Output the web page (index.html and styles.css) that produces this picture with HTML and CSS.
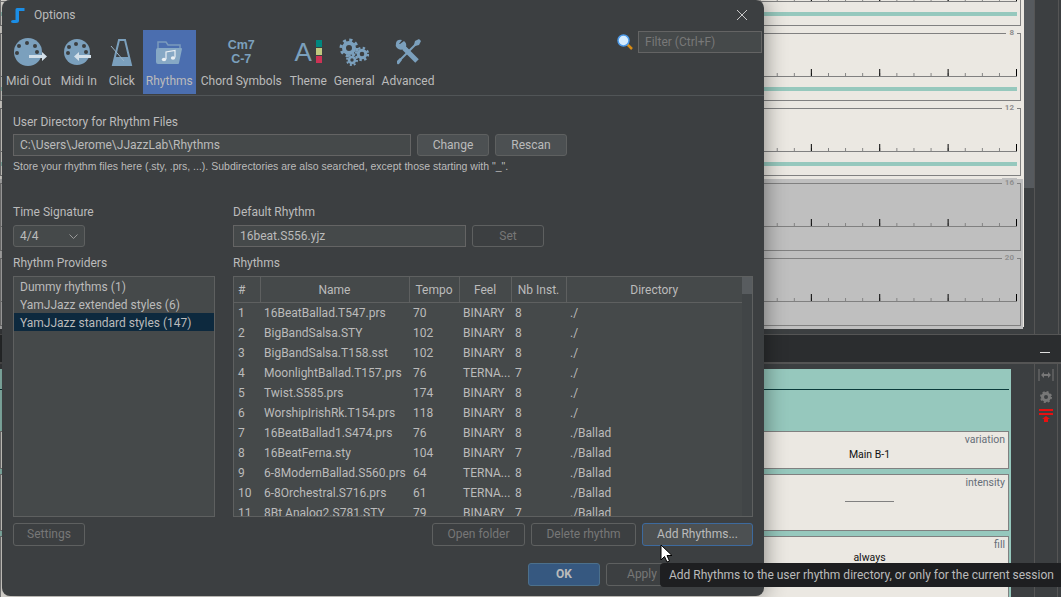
FILE: index.html
```html
<!DOCTYPE html>
<html lang="en">
<head>
    <meta charset="UTF-8">
    <title>Options</title>
    <link rel="stylesheet" href="styles.css">
</head>
<body>
    <!-- application behind the dialog -->
    <div class="app">
        <div class="app-top">
            <div class="bars">
                <div class="bar"><div class="ruler"></div><div class="strip"></div></div>
                <div class="bar"><span class="bar-num">8</span><div class="ruler"></div><div class="strip"></div></div>
                <div class="bar"><span class="bar-num">12</span><div class="ruler"></div><div class="strip"></div></div>
                <div class="bars-off">
                    <div class="bar bar-off"><span class="bar-num">16</span><div class="ruler"></div></div>
                    <div class="bar bar-off"><span class="bar-num">20</span><div class="ruler"></div></div>
                </div>
            </div>
            <div class="app-scroll"><div class="app-thumb"></div></div>
            <div class="app-side"></div>
        </div>
        <div class="app-head"><span class="minimize"></span></div>
        <div class="app-bottom">
            <div class="song">
                <div class="song-top"><div class="song-line"></div></div>
                <div class="card card-a"><span class="card-name">variation</span><span class="card-value">Main B-1</span></div>
                <div class="card card-b"><span class="card-name">intensity</span><span class="card-rule"></span></div>
                <div class="card card-c"><span class="card-name">fill</span><span class="card-value">always</span></div>
            </div>
            <div class="tools">
                <svg class="tool" width="16" height="12" viewBox="0 0 16 12">
                    <path d="M1 0v12M15 0v12" stroke="#777" fill="none"/>
                    <path d="M3 6l3-3v2h4V3l3 3-3 3V7H6v2z" fill="#777"/>
                </svg>
                <svg class="tool" width="12" height="12" viewBox="0 0 24 24">
                    <circle cx="12" cy="12" r="7" fill="none" stroke="#777" stroke-width="6"/>
                    <circle cx="12" cy="12" r="10" fill="none" stroke="#777" stroke-width="4" stroke-dasharray="4 3.85"/>
                </svg>
                <svg class="tool-red" width="14" height="14" viewBox="0 0 14 14">
                    <path d="M0 0h14v2H0zM0 4h14v2H0z" fill="#e81010"/>
                    <path d="M7 7l4 3H9v3H5v-3H3z" fill="#e81010"/>
                </svg>
            </div>
        </div>
    </div>

    <!-- options dialog -->
    <div class="dialog">
        <div class="titlebar">
            <svg class="logo" width="14" height="16" viewBox="0 0 14 16">
                <path d="M4.5 13V2.500q0-1.500 1.500-1.500H13.500v3H8v9.500q0 2.500-3 2.500H2.500Q0 16 0 14.500t2-1.500z" fill="#1b8ee6"/>
            </svg>
            <span class="title">Options</span>
            <svg class="close" width="12" height="12" viewBox="0 0 12 12">
                <path d="M1 1l10 10M11 1L1 11" stroke="#c8c8c8" fill="none"/>
            </svg>
        </div>

        <div class="tabbar">
            <div class="tab tab-out">
                <div class="tab-icon">
                    <svg width="40" height="30" viewBox="0 0 40 30">
                        <circle cx="20" cy="15" r="14" fill="#7ba0bd"/>
                        <g fill="#3c3f41"><circle cx="11" cy="9" r="2"/><circle cx="19" cy="6" r="2"/><circle cx="27" cy="9" r="2"/><circle cx="9" cy="16" r="2"/><circle cx="29" cy="15" r="2"/></g>
                        <path d="M21 18h13v-3l5 4.500-5 4.500v-3H21z" fill="#d3e0ea"/>
                    </svg>
                </div>
                <span>Midi Out</span>
            </div>
            <div class="tab tab-in">
                <div class="tab-icon">
                    <svg width="34" height="30" viewBox="0 0 34 30">
                        <circle cx="15" cy="15" r="13" fill="#7ba0bd"/>
                        <g fill="#3c3f41"><circle cx="7" cy="10" r="2"/><circle cx="14" cy="7" r="2"/><circle cx="22" cy="9" r="2"/><circle cx="6" cy="16" r="2"/><circle cx="24" cy="15" r="2"/></g>
                        <path d="M29 18H17v-3l-5 4.500 5 4.500v-3h12z" fill="#d3e0ea"/>
                    </svg>
                </div>
                <span>Midi In</span>
            </div>
            <div class="tab tab-click">
                <div class="tab-icon">
                    <svg width="24" height="30" viewBox="0 0 24 30">
                        <path d="M9 3h6l6 25H3z" fill="none" stroke="#7ba0bd" stroke-width="2"/>
                        <path d="M5 20h14l2 8H3z" fill="#7ba0bd"/>
                        <path d="M1 9l13 15" stroke="#9ab4c8" fill="none"/>
                    </svg>
                </div>
                <span>Click</span>
            </div>
            <div class="tab tab-on">
                <div class="tab-icon">
                    <svg width="28" height="26" viewBox="0 0 28 26">
                        <path d="M3 22V3h8l2 3h12v4" fill="none" stroke="#7b9bbd" stroke-width="1.500"/>
                        <path d="M3 9h23q1 0 1 1l-3 14q0 1-1 1H3q-2 0-2-2V11q0-2 2-2z" fill="#86a8c5"/>
                        <path d="M11 20V13l9-1.500v7" fill="none" stroke="#e9eff4" stroke-width="1.200"/>
                        <ellipse cx="9" cy="20.500" rx="2.200" ry="1.700" fill="#e9eff4"/>
                        <ellipse cx="18" cy="19" rx="2.200" ry="1.700" fill="#e9eff4"/>
                    </svg>
                </div>
                <span>Rhythms</span>
            </div>
            <div class="tab tab-chord">
                <div class="tab-icon chord-icon">
                    <span>Cm7</span>
                    <span>C-7</span>
                </div>
                <span>Chord Symbols</span>
            </div>
            <div class="tab tab-theme">
                <div class="tab-icon theme-icon">
                    <span class="theme-a">A</span>
                    <div class="swatches">
                        <i class="swatch swatch-teal"></i>
                        <i class="swatch swatch-lime"></i>
                        <i class="swatch swatch-red"></i>
                    </div>
                </div>
                <span>Theme</span>
            </div>
            <div class="tab tab-general">
                <div class="tab-icon">
                    <svg width="30" height="28" viewBox="0 0 30 28">
                        <g fill="none" stroke="#7ba0bd">
                            <circle cx="10" cy="10" r="5" stroke-width="4"/>
                            <circle cx="10" cy="10" r="8" stroke-width="3" stroke-dasharray="3.140 3.140"/>
                            <circle cx="23" cy="16" r="3.800" stroke-width="3"/>
                            <circle cx="23" cy="16" r="6" stroke-width="2.400" stroke-dasharray="2.360 2.350"/>
                            <circle cx="13" cy="22" r="3" stroke-width="2.600"/>
                            <circle cx="13" cy="22" r="5" stroke-width="2" stroke-dasharray="1.960 1.960"/>
                        </g>
                    </svg>
                </div>
                <span>General</span>
            </div>
            <div class="tab tab-advanced">
                <div class="tab-icon">
                    <svg width="26" height="26" viewBox="0 0 26 26">
                        <path d="M24 2L3 23" stroke="#7ba0bd" stroke-width="2" fill="none"/>
                        <path d="M24 0l2 2-2 4-4 1-1-1 1-4z" fill="#7ba0bd"/>
                        <path d="M2 22l3-3 2 2-3 4q-2 1-2-1z" fill="#7ba0bd"/>
                        <path d="M9 9l13 13" stroke="#7ba0bd" stroke-width="5" fill="none"/>
                        <path d="M7 1Q2 0 1 4 0 7 2 9q3 3 7 1l3 3 2-2-3-3q1-4-2-6L5 5 4 5z" fill="#7ba0bd"/>
                    </svg>
                </div>
                <span>Advanced</span>
            </div>
            <div class="search">
                <svg width="16" height="16" viewBox="0 0 16 16">
                    <path d="M10 10l5 5" stroke="#d98c14" stroke-width="2.500" fill="none"/>
                    <circle cx="6.500" cy="6.500" r="5.500" fill="#d5ecff" stroke="#4d9ae8" stroke-width="1.500"/>
                </svg>
                <div class="filter">Filter (Ctrl+F)</div>
            </div>
        </div>

        <div class="content">
            <div class="label label-top">User Directory for Rhythm Files</div>
            <div class="row">
                <div class="field field-dir">C:\Users\Jerome\JJazzLab\Rhythms</div>
                <div class="btn">Change</div>
                <div class="btn">Rescan</div>
            </div>
            <div class="hint">Store your rhythm files here (.sty, .prs, ...). Subdirectories are also searched, except those starting with "_".</div>

            <div class="columns">
                <div class="col">
                    <div class="label">Time Signature</div>
                    <div class="row">
                        <div class="combo">
                            <span>4/4</span>
                            <svg width="9" height="5" viewBox="0 0 9 5"><path d="M.5.500l4 4 4-4" stroke="#9a9a9a" fill="none"/></svg>
                        </div>
                    </div>
                    <div class="label label-gap">Rhythm Providers</div>
                    <div class="list">
                        <div class="list-item">Dummy rhythms (1)</div>
                        <div class="list-item">YamJJazz extended styles (6)</div>
                        <div class="list-item list-sel">YamJJazz standard styles (147)</div>
                    </div>
                    <div class="row row-actions">
                        <div class="btn btn-off">Settings</div>
                    </div>
                </div>
                <div class="col">
                    <div class="label">Default Rhythm</div>
                    <div class="row">
                        <div class="field field-default">16beat.S556.yjz</div>
                        <div class="btn btn-off">Set</div>
                    </div>
                    <div class="label label-gap">Rhythms</div>
                    <div class="table-box">
                        <div class="table-view">
                            <table>
                                <colgroup>
                                    <col class="c-num"><col class="c-name"><col class="c-tempo"><col class="c-feel"><col class="c-inst"><col>
                                </colgroup>
                                <thead>
                                    <tr><th>#</th><th>Name</th><th>Tempo</th><th>Feel</th><th>Nb Inst.</th><th>Directory</th></tr>
                                </thead>
                                <tbody>
                                    <tr><td>1</td><td>16BeatBallad.T547.prs</td><td>70</td><td>BINARY</td><td>8</td><td>./</td></tr>
                                    <tr><td>2</td><td>BigBandSalsa.STY</td><td>102</td><td>BINARY</td><td>8</td><td>./</td></tr>
                                    <tr><td>3</td><td>BigBandSalsa.T158.sst</td><td>102</td><td>BINARY</td><td>8</td><td>./</td></tr>
                                    <tr><td>4</td><td>MoonlightBallad.T157.prs</td><td>76</td><td>TERNA...</td><td>7</td><td>./</td></tr>
                                    <tr><td>5</td><td>Twist.S585.prs</td><td>174</td><td>BINARY</td><td>8</td><td>./</td></tr>
                                    <tr><td>6</td><td>WorshipIrishRk.T154.prs</td><td>118</td><td>BINARY</td><td>8</td><td>./</td></tr>
                                    <tr><td>7</td><td>16BeatBallad1.S474.prs</td><td>76</td><td>BINARY</td><td>8</td><td>./Ballad</td></tr>
                                    <tr><td>8</td><td>16BeatFerna.sty</td><td>104</td><td>BINARY</td><td>7</td><td>./Ballad</td></tr>
                                    <tr><td>9</td><td>6-8ModernBallad.S560.prs</td><td>64</td><td>TERNA...</td><td>8</td><td>./Ballad</td></tr>
                                    <tr><td>10</td><td>6-8Orchestral.S716.prs</td><td>61</td><td>TERNA...</td><td>8</td><td>./Ballad</td></tr>
                                    <tr><td>11</td><td>8Bt Analog2.S781.STY</td><td>79</td><td>BINARY</td><td>7</td><td>./Ballad</td></tr>
                                </tbody>
                            </table>
                        </div>
                        <div class="table-scroll"><div class="table-thumb"></div></div>
                    </div>
                    <div class="row row-actions row-end">
                        <div class="btn btn-off btn-open">Open folder</div>
                        <div class="btn btn-off btn-delete">Delete rhythm</div>
                        <div class="btn btn-focus btn-add">Add Rhythms...</div>
                    </div>
                </div>
            </div>

            <div class="footer">
                <div class="btn btn-ok">OK</div>
                <div class="btn btn-off">Apply</div>
            </div>
        </div>
    </div>

    <div class="tooltip">Add Rhythms to the user rhythm directory, or only for the current session</div>
    <svg class="cursor" width="13" height="19" viewBox="0 0 13 19">
        <path d="M1 1v15l3.500-3.500 2.500 5.500 2.500-1-2.500-5.500H12z" fill="#fff" stroke="#000"/>
    </svg>
</body>
</html>
```

FILE: styles.css
```css
* {
    margin: 0;
    padding: 0;
    box-sizing: border-box;
}
body {
    width: 1061px;
    height: 597px;
    overflow: hidden;
    position: relative;
    background: #3c3f41;
    font-family: Roboto, "Noto Sans", sans-serif;
    font-size: 12px;
    color: #bbbbbb;
}

/* application behind the dialog */
.app {
    height: 597px;
    display: flex;
    flex-direction: column;
}
.app-top {
    height: 335px;
    flex: none;
    display: flex;
    overflow: hidden;
    border-bottom: 1px solid #555;
}
.bars {
    width: 1024px;
    height: 369px;
    flex: none;
    margin-top: -42px;
    padding-right: 3px;
    background: #ebe8e2;
    display: flex;
    flex-direction: column;
    gap: 7px;
}
.bars-off {
    margin-top: -4px;
    margin-right: -2px;
    padding: 4px 2px 3px 0;
    background: #bfbfbf;
    display: flex;
    flex-direction: column;
    gap: 7px;
}
.bar {
    height: 68px;
    flex: none;
    position: relative;
    border: 1px solid #808080;
    background: #ebe8e2;
}
.bar-off {
    background: #bfbfbf;
}
.bar-num {
    position: absolute;
    top: -6px;
    right: 3px;
    padding: 0 3px;
    font-size: 8px;
    line-height: 10px;
    font-weight: 700;
    color: #8f8f8f;
    background: #ebe8e2;
}
.bar-off .bar-num {
    background: #bfbfbf;
}
.ruler {
    height: 8px;
    margin: 35px 3px 0 0;
    border-bottom: 1px solid #808080;
    background:
        linear-gradient(to left, #000 1px, transparent 1px) right bottom / 68.4px 7px repeat-x,
        linear-gradient(to left, #808080 1px, transparent 1px) right bottom / 17.1px 3px repeat-x;
}
.strip {
    height: 4px;
    margin: 10px 3px 0 0;
    background: #96c8bd;
}
.app-scroll {
    width: 11px;
    flex: none;
    background: #3c3f41;
    border-right: 1px solid #555;
}
.app-thumb {
    height: 188px;
    background: #565a5e;
}
.app-side {
    flex: 1;
    margin-right: 2px;
    border-right: 1px solid #555;
}
.app-head {
    height: 27px;
    flex: none;
    background: #2b2d2f;
    display: flex;
    align-items: flex-end;
    justify-content: flex-end;
    padding: 0 11px 9px 0;
}
.minimize {
    width: 10px;
    height: 1px;
    background: #e0e0e0;
}
.app-bottom {
    flex: 1;
    display: flex;
    border-top: 2px solid #555;
    min-height: 0;
}
.song {
    width: 1011px;
    margin-top: 5px;
    background: #96c8bd;
    padding-right: 2px;
    flex: none;
}
.song-top {
    height: 62px;
    padding-top: 20px;
}
.song-line {
    height: 1px;
    background: #0b3a3a;
}
.card {
    position: relative;
    border: 1px solid #808080;
    background: #ebe8e2;
    margin-bottom: 5px;
    padding-left: 730px;
    display: flex;
    justify-content: center;
    color: #111;
    font-size: 10.500px;
}
.card-a {
    height: 38px;
    padding-top: 16px;
}
.card-b {
    height: 57px;
    padding-top: 26px;
}
.card-c {
    height: 70px;
    padding-top: 14px;
}
.card-name {
    position: absolute;
    top: 1px;
    right: 3px;
    font-size: 10.500px;
    line-height: 14px;
    color: #666e78;
}
.card-value {
    line-height: 14px;
}
.card-rule {
    width: 49px;
    height: 1px;
    background: #808080;
}
.tools {
    margin-left: 23px;
    width: 24px;
    flex: none;
    border-left: 1px solid #555;
    border-right: 1px solid #555;
    display: flex;
    flex-direction: column;
    align-items: center;
    padding-top: 5px;
}
.tool {
    margin-bottom: 10px;
}
.tool-red {
    margin-top: -4px;
}

/* dialog */
.dialog {
    position: absolute;
    left: 2px;
    top: 0;
    width: 762px;
    height: 596px;
    background: #3c3f41;
    border-radius: 8px;
    box-shadow: 0 0 22px rgba(0, 0, 0, 0.45);
    overflow: hidden;
}
.titlebar {
    height: 30px;
    display: flex;
    align-items: center;
    padding: 0 16px 0 9px;
}
.logo {
    margin-right: 9px;
}
.title {
    flex: 1;
}
.tabbar {
    height: 66px;
    display: flex;
    border-bottom: 1px solid #515557;
    padding-left: 1px;
}
.tab {
    height: 64px;
    display: flex;
    flex-direction: column;
    align-items: center;
    padding: 0 3px;
    line-height: 16px;
    white-space: nowrap;
}
.tab-in {
    margin-left: 4px;
}
.tab-click {
    margin-left: 6px;
}
.tab-on {
    margin-left: 5px;
    background: #4b6eaf;
}
.tab-chord,
.tab-theme {
    margin-left: 2px;
}
.tab-general,
.tab-advanced {
    margin-left: 1px;
}
.tab-icon {
    height: 43px;
    display: flex;
    align-items: center;
    justify-content: center;
}
.chord-icon {
    flex-direction: column;
    font-family: "Liberation Sans", sans-serif;
    font-weight: 700;
    font-size: 12.500px;
    line-height: 14px;
    color: #7ba0bd;
}
.theme-icon {
    gap: 4px;
}
.theme-a {
    font-family: "Liberation Sans", sans-serif;
    font-size: 26px;
    line-height: 26px;
    color: #7ba0bd;
}
.swatches {
    display: flex;
    flex-direction: column;
    gap: 1px;
}
.swatch {
    display: block;
    width: 6px;
    height: 7px;
}
.swatch-teal {
    background: #00877f;
}
.swatch-lime {
    background: #bfc97f;
}
.swatch-red {
    background: #cc3355;
}
.search {
    margin-left: auto;
    display: flex;
    align-items: center;
    gap: 5px;
    height: 22px;
    margin-top: 1px;
    margin-right: 2px;
}
.filter {
    width: 124px;
    height: 22px;
    line-height: 20px;
    padding-left: 6px;
    border: 1px solid #646464;
    background: #45494a;
    color: #787878;
}
.content {
    padding: 17px 9px 0 11px;
}
.label {
    height: 16px;
    line-height: 16px;
    margin-bottom: 5px;
}
.label-top {
    line-height: 18px;
}
.label-gap {
    margin-top: 8px;
}
.row {
    display: flex;
    gap: 6px;
}
.row-actions {
    margin-top: 6px;
}
.row-end {
    justify-content: flex-end;
}
.field {
    height: 22px;
    line-height: 21px;
    padding-left: 6px;
    border: 1px solid #646464;
    background: #45494a;
}
.field-dir {
    width: 398px;
}
.field-default {
    width: 233px;
}
.btn {
    width: 72px;
    height: 22px;
    line-height: 21px;
    text-align: center;
    border: 1px solid #5e6060;
    border-radius: 3px;
    background: #4c5052;
}
.row-actions .btn,
.footer .btn {
    height: 23px;
    line-height: 21px;
}
.btn-off {
    background: transparent;
    color: #777777;
}
.btn-focus {
    border-color: #3d6a9e;
    background: #4c5052;
}
.btn-open {
    width: 93px;
}
.btn-delete {
    width: 105px;
}
.btn-add {
    width: 111px;
}
.btn-ok {
    background: #365880;
    border-color: #4c708c;
    font-weight: 700;
}
.hint {
    margin-top: 3px;
    height: 14px;
    line-height: 14px;
    font-family: "Liberation Sans", sans-serif;
    font-size: 10.500px;
}
.columns {
    margin-top: 31px;
    display: grid;
    grid-template-columns: 202px 520px;
    column-gap: 18px;
}
.combo {
    width: 72px;
    height: 22px;
    padding: 0 6px;
    display: flex;
    align-items: center;
    justify-content: space-between;
    border: 1px solid #5e6060;
    border-radius: 3px;
    background: #45494a;
}
.list {
    height: 241px;
    border: 1px solid #5e6060;
    background: #45494a;
}
.list-item {
    height: 18px;
    line-height: 20px;
    padding-left: 6px;
}
.list-sel {
    background: #0d293e;
}
.table-box {
    height: 241px;
    display: flex;
    border: 1px solid #5e6060;
    background: #45494a;
}
.table-view {
    width: 508px;
    overflow: hidden;
    flex: none;
}
table {
    width: 508px;
    table-layout: fixed;
    border-collapse: collapse;
}
.c-num {
    width: 26px;
}
.c-name {
    width: 149px;
}
.c-tempo {
    width: 50px;
}
.c-feel {
    width: 52px;
}
.c-inst {
    width: 55px;
}
th {
    height: 25px;
    padding-top: 2px;
    font-weight: 400;
    border-right: 1px solid #5e6060;
    border-bottom: 1px solid #5e6060;
}
th:first-child {
    text-align: left;
    padding-left: 4px;
}
th:last-child {
    border-right: 0;
}
td {
    height: 20px;
    padding: 1px 0 0 4px;
    line-height: 19px;
    white-space: nowrap;
    overflow: hidden;
}
.table-scroll {
    flex: 1;
    background: #414547;
}
.table-thumb {
    height: 17px;
    background: #585c5f;
}
.footer {
    margin-top: 17px;
    padding-right: 77px;
    display: flex;
    justify-content: flex-end;
    gap: 6px;
}

/* things on top */
.tooltip {
    position: absolute;
    left: 660px;
    top: 563px;
    width: 401px;
    height: 24px;
    line-height: 24px;
    padding-left: 9px;
    white-space: nowrap;
    border-radius: 4px 0 0 4px;
    background: #1e1f21;
}
.cursor {
    position: absolute;
    left: 660px;
    top: 544px;
}
```
